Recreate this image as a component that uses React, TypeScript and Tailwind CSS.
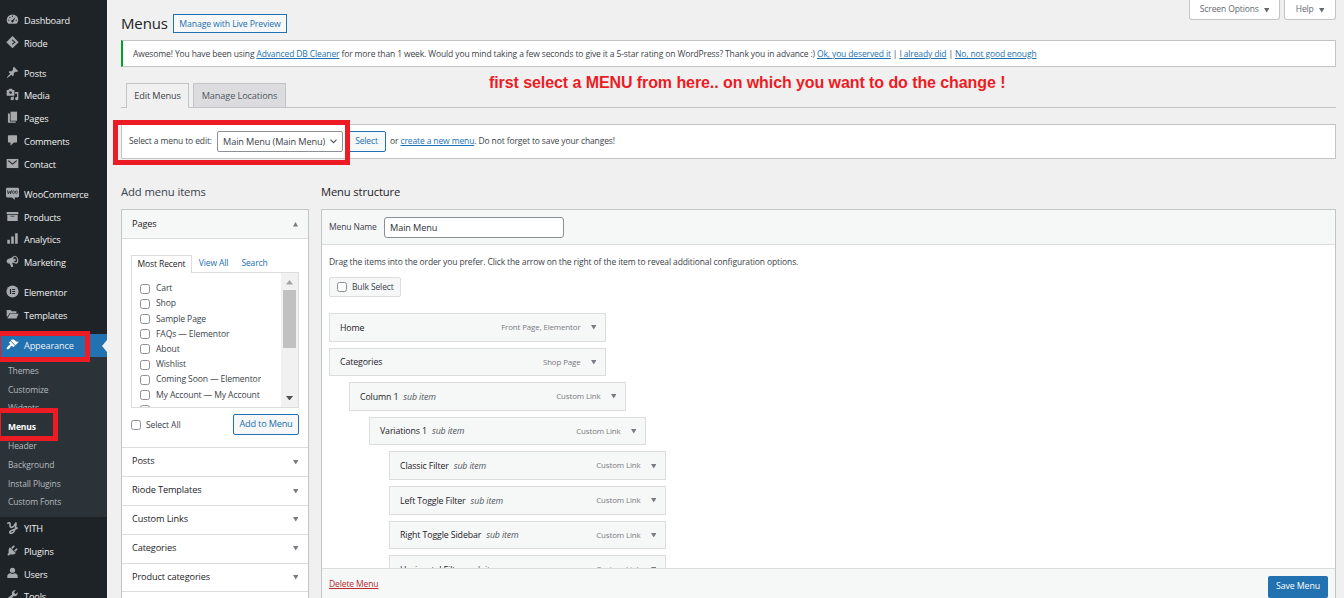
import type { ReactNode } from "react";

function Icon({ children }: { children: ReactNode }) {
  return (
    <svg viewBox="0 0 20 20" className="size-[13px]" fill="currentColor">
      {children}
    </svg>
  );
}

const dark = "#1d2327";

const icons: Record<string, ReactNode> = {
  Dashboard: (
    <Icon>
      <path d="M3.8 16.5h12.4A8.6 8.6 0 0 0 18.8 11a8.8 8.8 0 0 0-17.6 0c0 2.100.9 4.100 2.600 5.500z" />
      <g fill={dark}>
        <circle cx="10" cy="5" r="1" />
        <circle cx="6" cy="7" r="1" />
        <circle cx="4.300" cy="11" r="1" />
        <circle cx="15.700" cy="11" r="1" />
        <path d="M14.800 6l-3.200 6.200a1.800 1.800 0 1 1-1.600-1.300z" />
      </g>
    </Icon>
  ),
  Riode: (
    <Icon>
      <path d="M10 0l9.500 9.500L10 19 .5 9.500z" />
      <path d="M9.500 5l5.500 4.500-5.500 4.500z" fill={dark} />
      <circle cx="9.800" cy="9.500" r="1.800" />
    </Icon>
  ),
  Posts: (
    <Icon>
      <path d="M10.44 3.02l1.82-1.82 6.36 6.35-1.83 1.82c-1.05-.68-2.48-.57-3.41.36l-.75.75c-.92.93-1.04 2.35-.35 3.41l-1.83 1.82-2.41-2.41-2.8 2.79c-.42.42-3.38 2.71-3.8 2.29s1.86-3.39 2.28-3.81l2.79-2.79L4.1 9.36l1.83-1.82c1.05.69 2.48.57 3.4-.36l.75-.75c.93-.92 1.05-2.35.36-3.41z" />
    </Icon>
  ),
  Media: (
    <Icon>
      <path d="M13 11V4c0-.55-.45-1-1-1h-1.67L9 1H5L3.67 3H2c-.55 0-1 .45-1 1v7c0 .55.45 1 1 1h10c.55 0 1-.45 1-1zM14 6h5v10.500a2.500 2.500 0 1 1-2-2.450V9h-3zM10 14.050V13h2v3.500a2.500 2.500 0 1 1-2-2.450z" />
      <circle cx="7" cy="7" r="2" fill={dark} />
    </Icon>
  ),
  Pages: (
    <Icon>
      <path d="M7 1h10v14H7z" />
      <path d="M3 4h3v12h9v2H3z" />
    </Icon>
  ),
  Comments: (
    <Icon>
      <path d="M4 2h12a1 1 0 0 1 1 1v9a1 1 0 0 1-1 1h-4l-5 5v-5H4a1 1 0 0 1-1-1V3a1 1 0 0 1 1-1z" />
    </Icon>
  ),
  Contact: (
    <Icon>
      <path d="M1 3h18v14H1z" />
      <path d="M3.500 5.500l6.500 5.500 6.500-5.500" fill="none" stroke={dark} strokeWidth="1.700" />
    </Icon>
  ),
  WooCommerce: (
    <Icon>
      <path d="M2 1h16a2 2 0 0 1 2 2v11a2 2 0 0 1-2 2h-5l1 4-5-4H2a2 2 0 0 1-2-2V3a2 2 0 0 1 2-2z" />
      <path d="M2.500 5l1 5.500L6 6.500l1 4L8.500 5" fill="none" stroke={dark} strokeWidth="1.300" />
      <ellipse cx="11.500" cy="8" rx="1.500" ry="2.300" fill="none" stroke={dark} strokeWidth="1.100" />
      <ellipse cx="16" cy="8" rx="1.500" ry="2.300" fill="none" stroke={dark} strokeWidth="1.100" />
    </Icon>
  ),
  Products: (
    <Icon>
      <path d="M1 3h18v3.500H1zM2 7.500h16V17H2z" />
      <path d="M7 9h6v1H7z" fill={dark} />
    </Icon>
  ),
  Analytics: (
    <Icon>
      <path d="M2 12h4v6H2zM8 7h4v11H8zM14 2h4v16h-4z" />
    </Icon>
  ),
  Marketing: (
    <Icon>
      <path d="M13.500 1c3 .4 5.500 3.700 5.500 7s-1.500 5.500-3.500 5.300c-2-.3-3.700-1.500-6-1.300l1.800 5.500-3 1.500L5.500 13C2.500 13.500 1 11.500 1 9.500s1.500-3.300 4-4C9 4.500 11 1.500 13.500 1z" />
      <ellipse cx="14.300" cy="7" rx="2.700" ry="4.500" transform="rotate(-15 14.300 7)" fill={dark} />
      <circle cx="13.300" cy="7.500" r="1.800" />
    </Icon>
  ),
  Elementor: (
    <Icon>
      <circle cx="10" cy="10" r="9.300" />
      <path d="M6 6h1.800v8H6zM9.500 6H14v1.600H9.500zM9.500 9.200H14v1.600H9.500zM9.500 12.400H14V14H9.500z" fill={dark} />
    </Icon>
  ),
  Templates: (
    <Icon>
      <path d="M1 3h6l2 2h7v3H5.500L2.500 13H1zM6.300 9H19.500l-3.500 7H2z" />
    </Icon>
  ),
  Appearance: (
    <Icon>
      <path d="M14.48 11.06L7.41 3.99l1.5-1.5c.5-.56 2.3-.47 3.51.32 1.21.8 1.43 1.28 2.91 2.1 1.18.64 2.45 1.26 4.45.85zm-.71.71L6.7 4.7 4.93 6.47c-.39.39-.39 1.02 0 1.41l1.06 1.06c.39.39.39 1.03 0 1.42-.6.6-1.43 1.11-2.21 1.69-.35.26-.7.53-1.01.84C1.43 14.23.4 16.08 1.4 17.07c.99 1 2.84-.03 4.18-1.36.31-.31.58-.66.85-1.02.57-.78 1.08-1.61 1.69-2.21.39-.39 1.02-.39 1.41 0l1.06 1.06c.39.39 1.02.39 1.41 0z" />
    </Icon>
  ),
  YITH: (
    <Icon>
      <path
        d="M2 4c2.500-2 4-1.500 4.200.500C6.400 7 5.500 10 8.500 9.800c3-.3 5-3.300 6.500-6.800M15 2c1 5-.5 10-2.500 13.500-1.500 2.800-4.500 4-6 3-1.800-1.400.2-3.700 4-4.700 3.500-.9 5-1.500 7.500-3.500"
        fill="none"
        stroke="currentColor"
        strokeWidth="2.500"
      />
    </Icon>
  ),
  Plugins: (
    <Icon>
      <path d="M13.11 4.36L9.87 7.6 8 5.73l3.24-3.24c.35-.34 1.05-.2 1.56.32.52.51.66 1.21.31 1.55zm-8 1.77l.91-1.12 9.01 9.01-1.19.84c-.71.71-2.63 1.16-3.82 1.16H6.14L4.9 17.26c-.59.59-1.54.59-2.12 0-.59-.58-.59-1.53 0-2.12l1.24-1.24v-3.88c0-1.13.4-3.19 1.09-3.89zm7.26 3.97l3.24-3.24c.34-.35 1.04-.21 1.55.31.52.51.66 1.21.31 1.55l-3.24 3.25z" />
    </Icon>
  ),
  Users: (
    <Icon>
      <circle cx="10" cy="5" r="4" />
      <path d="M2 17v-3c0-3 2.500-4.500 5-4.500 2 1.500 4 1.500 6 0 2.500 0 5 1.500 5 4.500v3z" />
    </Icon>
  ),
  Tools: (
    <Icon>
      <path d="M16.68 9.77c-1.34 1.34-3.3 1.67-4.95.99l-5.41 6.52c-.99.99-2.59.99-3.58 0s-.99-2.59 0-3.57l6.52-5.42c-.68-1.65-.35-3.61.99-4.95 1.28-1.28 3.12-1.62 4.72-1.06l-2.89 2.89 2.82 2.82 2.86-2.87c.53 1.58.18 3.39-1.08 4.65z" />
    </Icon>
  ),
};

function SideItem({ name, active = false }: { name: string; active?: boolean }) {
  return (
    <div
      className={
        active
          ? "flex h-[23px] shrink-0 items-center bg-[#2271b1] text-white"
          : "flex h-[22.8px] shrink-0 items-center text-[#a7aaad]"
      }
    >
      <span className="flex w-6 justify-center pb-0.5">{icons[name]}</span>
      <span className="flex-1 text-[9.2px] tracking-[-0.16px] text-[#f0f0f1]">{name}</span>
      {active && (
        <svg viewBox="0 0 5 12" className="h-3 w-[5px]" fill="#f0f0f1">
          <path d="M5 0v12L0 6z" />
        </svg>
      )}
    </div>
  );
}

function Gap() {
  return <div className="h-[7.2px] shrink-0" />;
}

function Sidebar() {
  return (
    <nav className="relative flex h-[598px] w-[107px] shrink-0 flex-col overflow-hidden bg-[#1d2327] pt-[9px]">
      {["Dashboard", "Riode"].map((n) => <SideItem key={n} name={n} />)}
      <Gap />
      {["Posts", "Media", "Pages", "Comments", "Contact"].map((n) => <SideItem key={n} name={n} />)}
      <Gap />
      {["WooCommerce", "Products", "Analytics", "Marketing"].map((n) => <SideItem key={n} name={n} />)}
      <Gap />
      {["Elementor", "Templates"].map((n) => <SideItem key={n} name={n} />)}
      <Gap />
      <SideItem name="Appearance" active />
      <div className="h-[160px] shrink-0 bg-[#2c3338] pt-[4.500px] pl-2 text-[8.5px] text-[#b4b9be]">
        {["Themes", "Customize", "Widgets", "", "Header", "Background", "Install Plugins", "Custom Fonts"].map(
          (n) => (
            <div key={n} className="flex h-[18.8px] items-center">
              {n}
            </div>
          ),
        )}
      </div>
      {["YITH", "Plugins", "Users", "Tools"].map((n) => <SideItem key={n} name={n} />)}
      <div className="absolute top-[331px] -left-1 h-[31px] w-[94px] border-5 border-[#ed1c24]" />
      <div className="absolute top-[408px] -left-1 h-[33px] w-[62px] border-5 border-[#ed1c24] bg-[#2c3338]">
        <span className="flex h-[28px] items-center pl-[7px] text-[8.5px] font-bold text-white">Menus</span>
      </div>
    </nav>
  );
}

function Triangle({ up = false, className = "" }: { up?: boolean; className?: string }) {
  return (
    <svg viewBox="0 0 6 5" preserveAspectRatio="none" className={`h-[4.500px] w-[5.500px] shrink-0 ${className}`} fill="currentColor">
      <path d={up ? "M0 5h6L3 0z" : "M0 0h6L3 5z"} />
    </svg>
  );
}

function Check() {
  return <span className="size-2.5 shrink-0 rounded-[2.500px] border border-[#8c8f94] bg-white" />;
}

function ScreenTab({ label, className }: { label: string; className: string }) {
  return (
    <div
      className={`flex h-5 items-center justify-center gap-[5px] rounded-b-[3px] border border-t-0 border-[#c3c4c7] bg-white text-[#646970] ${className}`}
    >
      {label}
      <Triangle className="mt-0.5" />
    </div>
  );
}

function AddItems() {
  const pages = ["Cart", "Shop", "Sample Page", "FAQs — Elementor", "About", "Wishlist", "Coming Soon — Elementor", "My Account — My Account", ""];
  return (
    <section className="w-[188px] shrink-0">
      <h2 className="flex h-[50px] items-center pb-0.5 text-[11.3px] font-normal text-[#3c434a]">
        <span className="pt-5">Add menu items</span>
      </h2>
      <div className="mt-px border border-[#c3c4c7] bg-white">
        <div className="flex h-[29px] items-center justify-between border-b border-[#dcdcde] bg-[#f6f7f7] px-2.5 pb-px text-[9.2px] text-[#1d2327]">
          Pages
          <Triangle up className="mt-0.5 h-1 w-[5px] text-[#787c82]" />
        </div>
        <div className="h-[208px] px-[9px] pt-4">
          <div className="flex h-[17px] text-[#2271b1]">
            <span className="z-10 -mb-px flex w-[61px] items-center justify-center border border-b-0 border-[#dcdcde] bg-white pb-px text-[#1d2327]">
              Most Recent
            </span>
            <span className="flex w-[43px] items-center justify-center">View All</span>
            <span className="flex w-[39px] items-center justify-center">Search</span>
          </div>
          <div className="flex h-[136px] justify-between overflow-hidden border border-[#dcdcde]">
            <div className="overflow-hidden pt-2 pl-2 text-[8.600px] text-[#3c434a]">
              {pages.map((p, i) => (
                <div key={i} className="flex h-[15.200px] items-center gap-1.5 whitespace-nowrap">
                  <Check />
                  {p}
                </div>
              ))}
            </div>
            <div className="flex w-[17px] shrink-0 flex-col items-center bg-[#f1f1f1] pt-[7px] pb-[7px]">
              <Triangle up className="h-1 w-[7px] text-[#a3a3a3]" />
              <div className="mt-[5px] h-[58px] w-[13px] bg-[#c1c1c1]" />
              <Triangle className="mt-auto h-1 w-[7px] text-[#505050]" />
            </div>
          </div>
          <div className="mt-1.5 flex h-[21px] items-center justify-between">
            <span className="flex items-center gap-[5px] pt-px text-[8.600px] text-[#3c434a]">
              <Check />
              Select All
            </span>
            <span className="flex h-[21px] w-[66px] items-center justify-center rounded-[2px] border border-[#2271b1] bg-[#f6f7f7] pb-px text-[9.2px] tracking-[-0.2px] text-[#2271b1]">
              Add to Menu
            </span>
          </div>
        </div>
        {["Posts", "Riode Templates", "Custom Links", "Categories", "Product categories", ""].map((t) => (
          <div
            key={t}
            className="flex h-[28.9px] items-center justify-between border-t border-[#dcdcde] px-2.5 pb-0.5 text-[9.2px] text-[#1d2327]"
          >
            {t}
            <Triangle className="mt-0.5 text-[#787c82]" />
          </div>
        ))}
      </div>
    </section>
  );
}

const items = [
  { title: "Home", type: "Front Page, Elementor", indent: "ml-0" },
  { title: "Categories", type: "Shop Page", indent: "ml-0" },
  { title: "Column 1", type: "Custom Link", indent: "ml-5" },
  { title: "Variations 1", type: "Custom Link", indent: "ml-10" },
  { title: "Classic Filter", type: "Custom Link", indent: "ml-[60px]" },
  { title: "Left Toggle Filter", type: "Custom Link", indent: "ml-[60px]" },
  { title: "Right Toggle Sidebar", type: "Custom Link", indent: "ml-[60px]" },
  { title: "Horizontal Filter", type: "Custom Link", indent: "ml-[60px]" },
];

function Structure() {
  return (
    <section className="min-w-0 flex-1">
      <h2 className="flex h-[50px] items-center pb-0.5 text-[11.2px] font-normal text-[#1d2327]">
        <span className="pt-5">Menu structure</span>
      </h2>
      <div className="mt-px flex h-[390px] flex-col border border-b-0 border-[#c3c4c7] bg-white">
        <div className="flex h-[35px] shrink-0 items-center border-b border-[#dcdcde] bg-[#f6f7f7] pl-[7px] text-[#3c434a]">
          <span className="w-[55px]">Menu Name</span>
          <span className="flex h-[21px] w-[180px] items-center rounded-[3px] border border-[#8c8f94] bg-white pt-0.5 pl-[5px] text-[9.2px] text-[#2c3338]">
            Main Menu
          </span>
        </div>
        <div className="min-h-0 flex-1 overflow-hidden pl-[7px]">
          <p className="mt-[11px] flex h-3 items-center text-[#3c434a]">
            Drag the items into the order you prefer. Click the arrow on the right of the item to reveal additional
            configuration options.
          </p>
          <div className="mt-[9px] flex h-5 w-[72px] items-center gap-[5px] rounded-[2px] border border-[#dcdcde] bg-[#f6f7f7] pl-[7px] text-[#3c434a]">
            <Check />
            Bulk Select
          </div>
          <div className="mt-4 flex flex-col gap-[6px]">
            {items.map((it) => (
              <div
                key={it.title}
                className={`flex h-[28.6px] w-[277px] shrink-0 items-center border border-[#dcdcde] bg-[#f6f7f7] pt-[1.500px] pr-[9px] pl-2.5 ${it.indent}`}
              >
                <span className="text-[8.800px] font-medium text-[#1d2327]">{it.title}</span>
                {it.indent !== "ml-0" && <span className="ml-[5px] text-[8.800px] text-[#50575e] italic">sub item</span>}
                <span className="ml-auto text-[7.900px] text-[#787c82]">{it.type}</span>
                <Triangle className="mb-px ml-2.5 text-[#787c82]" />
              </div>
            ))}
          </div>
        </div>
        <div className="flex h-[31px] shrink-0 items-center justify-between border-t border-[#dcdcde] bg-[#f6f7f7] pr-[7px] pl-[7px]">
          <span className="text-[#b32d2e] underline">Delete Menu</span>
          <span className="mt-[5px] flex h-[22px] w-[60px] items-center justify-center rounded-[2px] bg-[#2271b1] text-[8.800px] text-white">
            Save Menu
          </span>
        </div>
      </div>
    </section>
  );
}

export default function App() {
  return (
    <div className="relative flex h-[598px] w-[1344px] overflow-hidden bg-[#f0f0f1] font-['Open_Sans','Noto_Sans',sans-serif] text-[8.500px] leading-none tracking-[-0.12px] text-[#3c434a]">
      <Sidebar />
      <main className="min-w-0 flex-1 pr-2 pl-3.5">
        <header className="flex h-10 items-start">
          <h1 className="mt-4 w-[52px] text-[15px] font-normal text-[#1d2327]">Menus</h1>
          <span className="mt-3.5 flex h-[19px] w-[114px] items-center justify-center border border-[#2271b1] bg-[#f6f7f7] pt-px text-[8.700px] text-[#2271b1]">
            Manage with Live Preview
          </span>
          <div className="ml-auto flex gap-1">
            <ScreenTab label="Screen Options" className="w-[91px]" />
            <ScreenTab label="Help" className="w-[52px]" />
          </div>
        </header>
        <div className="flex h-[27px] items-center gap-[2px] border border-l-2 border-[#c3c4c7] border-l-[#00a32a] bg-white pt-px pl-2.5 tracking-[-0.123px] whitespace-nowrap">
          <span>Awesome! You have been using</span>
          <span className="text-[#2271b1] underline">Advanced DB Cleaner</span>
          <span>
            for more than 1 week. Would you mind taking a few seconds to give it a 5-star rating on WordPress? Thank you
            in advance :)
          </span>
          <span className="text-[#2271b1] underline">Ok, you deserved it</span>
          <span>|</span>
          <span className="text-[#2271b1] underline">I already did</span>
          <span>|</span>
          <span className="text-[#2271b1] underline">No, not good enough</span>
        </div>
        <div className="mt-4 flex h-[25px] gap-1 border-b border-[#c3c4c7] pl-[5px] text-[9.2px] font-medium">
          <span className="-mb-px flex w-[63px] items-center justify-center border border-b-0 border-[#c3c4c7] bg-[#f0f0f1] pb-px">
            Edit Menus
          </span>
          <span className="flex w-[93px] items-center justify-center border border-b-0 border-[#c3c4c7] bg-[#dcdcde] text-[#50575e]">
            Manage Locations
          </span>
        </div>
        <div className="mt-4 flex h-[35px] items-center border border-[#c3c4c7] bg-white pl-[7px]">
          <span className="w-[88px]">Select a menu to edit:</span>
          <span className="flex h-[21px] w-[126px] items-center justify-between rounded-[2px] border border-[#8c8f94] pr-[5px] pl-[5px] text-[9.2px]">
            Main Menu (Main Menu)
            <svg viewBox="0 0 7 5" className="h-[5px] w-[7px]" fill="none" stroke="#50575e" strokeWidth="1.200">
              <path d="M.5.7l3 3 3-3" />
            </svg>
          </span>
          <span className="ml-1 flex h-[21px] w-[39px] items-center justify-center rounded-[2px] border border-[#2271b1] bg-[#f6f7f7] text-[#2271b1]">
            Select
          </span>
          <span className="ml-1">
            or <span className="text-[#2271b1] underline">create a new menu</span>. Do not forget to save your changes!
          </span>
        </div>
        <div className="-mt-px flex gap-3">
          <AddItems />
          <Structure />
        </div>
      </main>
      <div className="absolute top-[120px] left-[113px] h-[45px] w-[237px] border-5 border-[#ed1c24]" />
      <p className="absolute top-[75px] left-[489px] font-['Liberation_Sans',Arial,sans-serif] text-[16px] font-bold tracking-[-0.08px] whitespace-nowrap text-[#ed1c24]">
        first select a MENU from here.. on which you want to do the change !
      </p>
    </div>
  );
}
